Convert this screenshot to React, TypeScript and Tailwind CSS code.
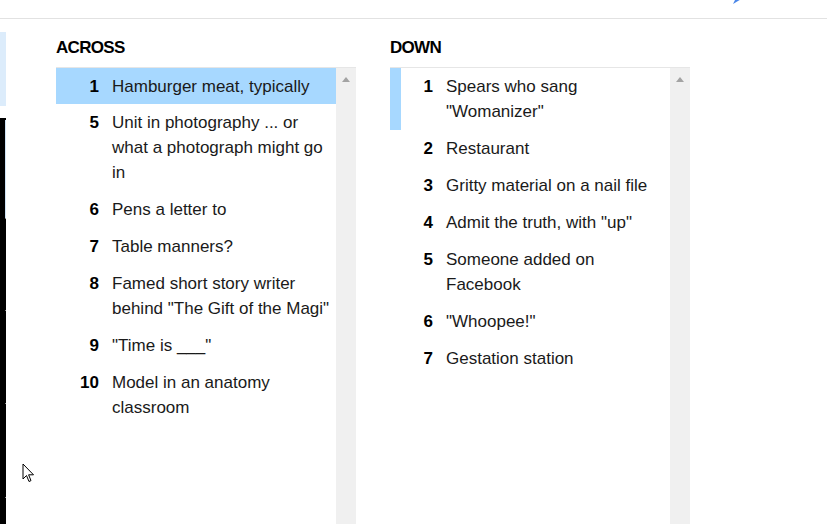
import React from "react";

type Clue = { n: number; t: string };

const across: Clue[] = [
  { n: 1, t: "Hamburger meat, typically" },
  { n: 5, t: "Unit in photography ... or what a photograph might go in" },
  { n: 6, t: "Pens a letter to" },
  { n: 7, t: "Table manners?" },
  { n: 8, t: 'Famed short story writer behind "The Gift of the Magi"' },
  { n: 9, t: '"Time is ___"' },
  { n: 10, t: "Model in an anatomy classroom" },
];

const down: Clue[] = [
  { n: 1, t: 'Spears who sang "Womanizer"' },
  { n: 2, t: "Restaurant" },
  { n: 3, t: "Gritty material on a nail file" },
  { n: 4, t: 'Admit the truth, with "up"' },
  { n: 5, t: "Someone added on Facebook" },
  { n: 6, t: '"Whoopee!"' },
  { n: 7, t: "Gestation station" },
];

function ClueList({
  title,
  clues,
  mode,
}: {
  title: string;
  clues: Clue[];
  mode: "full" | "bar";
}) {
  return (
    <div className="flex h-full w-[300px] flex-col">
      <div className="mt-[19px] mb-[9px] h-[20px] text-[17px] font-bold leading-[20px] tracking-[-0.7px] text-black">
        {title}
      </div>
      <div className="flex flex-1 border-t border-[#e6e6e6]">
        <div className="w-[280px]">
          {clues.map((c, i) => {
            const active = i === 0;
            const full = active && mode === "full";
            const bar = active && mode === "bar";
            return (
              <div
                key={c.n}
                className={`flex ${full ? "bg-[#a7d8ff] py-[5.5px]" : "py-[6px]"} pr-[6px]`}
              >
                <div
                  className={`w-[11px] shrink-0 self-stretch ${bar ? "bg-[#a7d8ff] -my-[6px]" : ""}`}
                />
                <div className="w-[32px] shrink-0 text-right text-[17px] font-bold leading-[25px] text-black">
                  {c.n}
                </div>
                <div className="ml-[13px] text-[17px] leading-[25px] text-[#1a1a1a]">
                  {c.t}
                </div>
              </div>
            );
          })}
        </div>
        <div className="flex w-[20px] justify-center bg-[#f0f0f0] pt-[9px]">
          <div className="h-0 w-0 border-x-[4px] border-b-[5px] border-x-transparent border-b-[#a3a3a3]" />
        </div>
      </div>
    </div>
  );
}

export default function App() {
  return (
    <div
      className="relative h-[524px] w-[827px] overflow-hidden bg-white"
      style={{ fontFamily: '"Liberation Sans", Arial, sans-serif' }}
    >
      <div className="h-[19px] border-b border-[#e2e2e2]" />
      <div className="flex h-[505px]">
        <div className="flex h-full w-[6px] flex-col">
          <div className="mt-[13px] h-[74px] shrink-0 bg-[#dcecfb]" />
          <div className="mt-[12px] flex flex-1 flex-col bg-black pt-[2px] pl-[5px]">
            <div className="h-[98px] shrink-0 bg-[#cfe3f5]" />
            <div className="h-[1px] shrink-0 bg-[#8a8a8a]" />
            <div className="h-[91px] shrink-0 bg-black" />
            <div className="h-[1px] shrink-0 bg-[#8a8a8a]" />
            <div className="h-[92px] shrink-0 bg-black" />
            <div className="h-[1px] shrink-0 bg-[#8a8a8a]" />
            <div className="h-[93px] shrink-0 bg-black" />
            <div className="h-[1px] shrink-0 bg-[#8a8a8a]" />
          </div>
        </div>
        <div className="ml-[50px] h-full">
          <ClueList title="ACROSS" clues={across} mode="full" />
        </div>
        <div className="ml-[34px] h-full">
          <ClueList title="DOWN" clues={down} mode="bar" />
        </div>
      </div>

      {/* partial blue icon at top edge */}
      <svg className="absolute left-[731px] top-[-6px]" width="14" height="12" viewBox="0 0 14 12">
        <path d="M2 10 L12 4 L11 1 L4 6 Z" fill="#4a86e8" />
      </svg>

      {/* mouse cursor */}
      <svg className="absolute left-[22px] top-[463px]" width="13" height="21" viewBox="0 0 13 21">
        <path
          d="M1 1 L1 16 L4.5 12.5 L7 18.5 L9 17.6 L6.6 11.8 L11.5 11.8 Z"
          fill="white"
          stroke="black"
          strokeWidth="1"
          strokeLinejoin="round"
        />
      </svg>
    </div>
  );
}
